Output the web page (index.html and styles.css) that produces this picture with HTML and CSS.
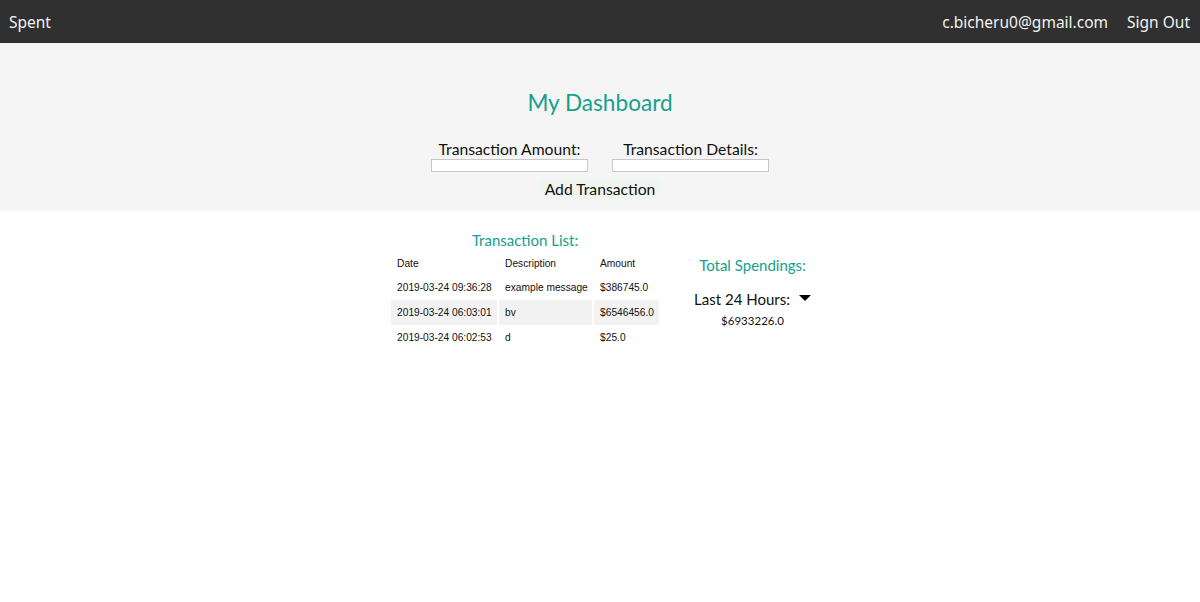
FILE: index.html
```html
<!DOCTYPE html>
<html>
<head>
<meta charset="utf-8">
<link rel="stylesheet" href="styles.css">
</head>
<body>
<nav class="navbar">
  <span class="brand">Spent</span>
  <div class="nav-right">
    <span class="nav-item">c.bicheru0@gmail.com</span>
    <span class="nav-item">Sign Out</span>
  </div>
</nav>
<section class="hero">
  <h1 class="title">My Dashboard</h1>
  <div class="form-row">
    <label class="field">
      <span class="field-label">Transaction Amount:</span>
      <input class="field-input" type="text">
    </label>
    <label class="field">
      <span class="field-label">Transaction Details:</span>
      <input class="field-input" type="text">
    </label>
  </div>
  <button class="add-btn">Add Transaction</button>
</section>
<section class="content">
  <div class="list-block">
    <h2 class="sub-title">Transaction List:</h2>
    <table class="tx-table">
      <thead>
        <tr><th class="c-date">Date</th><th class="c-desc">Description</th><th class="c-amt">Amount</th></tr>
      </thead>
      <tbody>
        <tr><td>2019-03-24 09:36:28</td><td>example message</td><td>$386745.0</td></tr>
        <tr class="alt"><td>2019-03-24 06:03:01</td><td>bv</td><td>$6546456.0</td></tr>
        <tr><td>2019-03-24 06:02:53</td><td>d</td><td>$25.0</td></tr>
      </tbody>
    </table>
  </div>
  <div class="total-block">
    <h2 class="sub-title total-title">Total Spendings:</h2>
    <div class="period">Last 24 Hours: <span class="caret"></span></div>
    <div class="total-value">$6933226.0</div>
  </div>
</section>
</body>
</html>
```
FILE: styles.css
```css
html, body {
  margin: 0;
  padding: 0;
  background: #ffffff;
  font-family: "Lato", "Liberation Sans", sans-serif;
  color: #111;
}
.navbar {
  height: 43px;
  background: #303030;
  display: flex;
  align-items: center;
  justify-content: space-between;
  padding: 1px 10px 0 9px;
  font-family: "Noto Sans", "Open Sans", sans-serif;
  font-size: 15.5px;
  color: #f2f2f2;
  box-sizing: border-box;
}
.nav-right {
  display: flex;
  gap: 19px;
}
.hero {
  background: #f5f5f5;
  height: 168px;
  display: flex;
  flex-direction: column;
  align-items: center;
  box-sizing: border-box;
  padding-top: 45px;
}
.title {
  margin: 0;
  font-size: 22.6px;
  font-weight: 400;
  color: #16a08d;
  line-height: 30px;
}
.form-row {
  display: flex;
  gap: 24px;
  margin-top: 22px;
}
.field {
  display: flex;
  flex-direction: column;
  align-items: center;
}
.field-label {
  font-size: 15.7px;
  line-height: 19px;
  color: #111;
}
.field-input {
  width: 157px;
  height: 13px;
  box-sizing: border-box;
  border: 1px solid #c8c8c8;
  background: #fff;
  padding: 0;
  margin: 0;
}
.add-btn {
  margin-top: 7px;
  font-family: "Lato", sans-serif;
  font-size: 15.7px;
  color: #111;
  background: #eff6ef;
  border: none;
  border-radius: 2px;
  padding: 0 6px;
  height: 20px;
  line-height: 20px;
}
.content {
  display: flex;
  justify-content: center;
  gap: 35px;
  padding-top: 20px;
  padding-left: 2px;
}
.list-block {
  display: flex;
  flex-direction: column;
  align-items: center;
}
.sub-title {
  margin: 0;
  font-size: 15px;
  font-weight: 400;
  color: #16a08d;
  line-height: 18px;
}
.tx-table {
  margin: 2px -2px 0 -2px;
  border-collapse: separate;
  border-spacing: 2px 0;
  table-layout: fixed;
  width: 272px;
  font-family: "Liberation Sans", Arial, sans-serif;
  font-size: 10.2px;
  color: #111;
  white-space: nowrap;
}
.tx-table th {
  font-weight: 400;
  text-align: left;
  padding: 0 6px;
  height: 24px;
}
.tx-table td {
  padding: 0 6px;
  height: 25px;
}
.c-date { width: 106px; }
.c-desc { width: 93px; }
.c-amt { width: 65px; }
.tx-table th, .tx-table td { box-sizing: border-box; }
.tx-table tr.alt td {
  background: #f2f2f2;
}
.total-block {
  display: flex;
  flex-direction: column;
  align-items: center;
  padding-top: 25px;
}
.total-title {
  line-height: 18px;
}
.period {
  margin-top: 16px;
  font-size: 15px;
  line-height: 18px;
  color: #111;
  display: flex;
  align-items: center;
}
.caret {
  display: inline-block;
  width: 0;
  height: 0;
  border-left: 6px solid transparent;
  border-right: 6px solid transparent;
  border-top: 6px solid #000;
  margin-left: 9px;
  margin-bottom: 3px;
}
.total-value {
  margin-top: 6px;
  font-size: 11.5px;
  line-height: 14px;
  color: #111;
}
```
